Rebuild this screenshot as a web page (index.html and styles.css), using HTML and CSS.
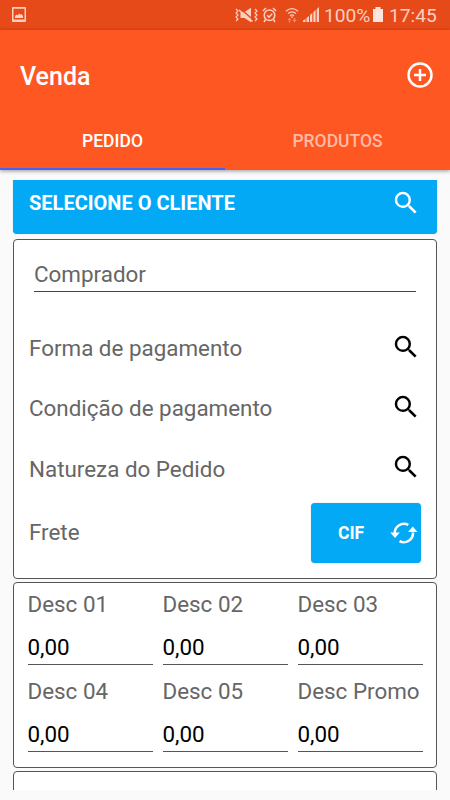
FILE: index.html
```html
<!DOCTYPE html>
<html lang="pt-BR">
<head>
<meta charset="utf-8">
<title>Venda</title>
<link rel="stylesheet" href="styles.css">
</head>
<body>
<svg class="defs" width="0" height="0">
  <symbol id="search" viewBox="0 0 24 24"><path d="M15.5 14h-.79l-.28-.27A6.47 6.47 0 0 0 16 9.5 6.5 6.5 0 1 0 9.5 16c1.61 0 3.09-.59 4.23-1.57l.27.28v.79l5 4.99L20.49 19l-4.99-5zm-6 0C7.01 14 5 11.99 5 9.500S7.010 5 9.500 5 14 7.010 14 9.500 11.990 14 9.500 14z"/></symbol>
</svg>
<div class="status">
  <svg class="st-img" viewBox="0 0 14 15"><path fill-rule="evenodd" d="M1 0h12a1 1 0 0 1 1 1v13a1 1 0 0 1-1 1H1a1 1 0 0 1-1-1V1a1 1 0 0 1 1-1zM1.500 1.700v10.800h11V1.700zM3 11V9l1.500-1.500 1 .7L7.500 6.500l1 1.200 1-.7L11 9v2z"/></svg>
  <svg class="st-mute" viewBox="0 0 23 16"><path d="M5.500 5h4L16 .8v14.400L9.500 11h-4z"/><path class="cut" d="M5 1.500 18.500 13"/><path class="ln" d="M4 3 17.500 14.500"/><path class="thin" d="M1 2l2 2-2 2 2 2-2 2 2 2-2 2M20 2l2 2-2 2 2 2-2 2 2 2-2 2"/></svg>
  <svg class="st-alarm" viewBox="0 0 15 16"><circle class="ln" cx="7.500" cy="8.300" r="5.300"/><path class="ln" d="M1 4 4 1M14 4 11 1M3.500 12.500 2 15M11.500 12.500 13 15M5 8.200l2 2 3.200-3.500"/></svg>
  <svg class="st-wifi" viewBox="0 0 14 16"><path class="wl" d="M1 4.200q6-5 12 0M3 6.600q4-3.400 8 0M5 8.800q2-1.700 4 0"/><path d="M7 11.200 5.500 9.500h3z"/><path class="dim" d="M2.500 13 4.500 10.800 6.500 13H5.200v2.500H3.800V13zM7.500 13 9.500 15.500 11.500 13h-1.300v-2H8.800v2z"/></svg>
  <svg class="st-signal" viewBox="0 0 16 16"><path d="M0 15v-1.500L2.500 12v3zM3.500 15v-4L6 9v6zM7 15V8l2.300-2v9zM10.400 15V5l2.200-2v12zM13.700 15V2.200L16 0v15z"/></svg>
  <span class="st-text st-pct">100%</span>
  <svg class="st-bat" viewBox="0 0 10 15"><path d="M2.500 0h5v2H10v13H0V2h2.500z"/></svg>
  <span class="st-text st-time">17:45</span>
</div>
<header class="appbar">
  <div class="titlebar">
    <h1 class="title">Venda</h1>
    <svg class="add" viewBox="0 0 26 26"><circle cx="13" cy="13" r="11.500"/><path d="M13 7v12M7 13h12"/></svg>
  </div>
  <nav class="tabs">
    <div class="tab active">PEDIDO</div>
    <div class="tab">PRODUTOS</div>
  </nav>
</header>
<main class="content">
  <div class="client"><span>SELECIONE O CLIENTE</span><svg class="search"><use href="#search"/></svg></div>
  <section class="card order">
    <div class="buyer">Comprador</div>
    <div class="row first"><span>Forma de pagamento</span><svg class="search"><use href="#search"/></svg></div>
    <div class="row"><span>Condição de pagamento</span><svg class="search"><use href="#search"/></svg></div>
    <div class="row last"><span>Natureza do Pedido</span><svg class="search"><use href="#search"/></svg></div>
    <div class="freight"><span>Frete</span>
      <div class="cif"><span>CIF</span>
        <svg class="sync" viewBox="0 0 28 22"><path class="arc" d="M4.800 11.500A9.200 9.200 0 0 1 18.300 2.900M23 10.500A9.200 9.200 0 0 1 9.500 19.100"/><path d="M.3 10.500h9.500L5 16zM18 10h9.500L22.800 4.500z"/></svg>
      </div>
    </div>
  </section>
  <section class="card discounts">
    <div class="field"><label>Desc 01</label><div class="value">0,00</div></div>
    <div class="field"><label>Desc 02</label><div class="value">0,00</div></div>
    <div class="field"><label>Desc 03</label><div class="value">0,00</div></div>
    <div class="field"><label>Desc 04</label><div class="value">0,00</div></div>
    <div class="field"><label>Desc 05</label><div class="value">0,00</div></div>
    <div class="field"><label>Desc Promo</label><div class="value">0,00</div></div>
  </section>
  <section class="card next"></section>
</main>
</body>
</html>
```

FILE: styles.css
```css
* { box-sizing: border-box; }
body { margin: 0; width: 450px; height: 800px; overflow: hidden; background: #fafafa; font-family: Roboto, sans-serif; font-size: 22.4px; color: #666; }
.defs { display: block; position: absolute; }
svg { flex: none; }

.status { display: flex; height: 30px; padding-left: 12px; background: #e64a19; color: #fbcfc1; fill: #fbcfc1; }
.status svg { overflow: visible; }
.st-img { width: 14px; height: 15px; margin-top: 7px; }
.st-mute { width: 23px; height: 16px; margin: 7px 0 0 209px; }
.st-alarm { width: 15px; height: 16px; margin: 7px 0 0 4px; }
.st-wifi { width: 14px; height: 16px; margin: 7px 0 0 8px; }
.st-signal { width: 16px; height: 16px; margin: 7px 0 0 4px; }
.st-bat { width: 10px; height: 15px; margin: 7px 0 0 3px; fill: #fde4dc; }
.ln, .thin, .wl { fill: none; stroke: #fbcfc1; stroke-width: 1.5; }
.thin { stroke-width: 1.2; }
.wl { stroke-width: 1.3; }
.cut { fill: none; stroke: #e64a19; stroke-width: 1.5; }
.dim { opacity: .5; }
.st-text { font-size: 19.2px; line-height: 31px; white-space: nowrap; }
.st-pct { width: 46px; margin-left: 5px; }
.st-time { margin-left: 6px; }

.appbar { position: relative; height: 140px; background: #ff5722; color: #fff; box-shadow: 0 1px 4px rgba(0,0,0,.4); }
.titlebar { display: flex; justify-content: space-between; height: 80px; padding: 0 17px 0 20px; }
.title { margin: 32px 0 0; font-size: 25px; line-height: 30px; font-weight: 500; }
.add { width: 26px; height: 26px; margin-top: 32px; fill: none; stroke: #fff; stroke-width: 2.5; }
.tabs { display: flex; height: 60px; }
.tab { flex: 1; text-align: center; font-size: 17.5px; line-height: 62px; font-weight: 500; color: #ffbba7; }
.tab.active { color: #fff; border-bottom: 2px solid #4463ee; }

.content { height: 610px; margin-top: 10px; padding: 0 13px; overflow: hidden; }
.client { display: flex; justify-content: space-between; height: 54px; padding: 0 16px; background: #03a9f4; color: #fff; fill: #fff; border-radius: 0 0 4px 4px; font-size: 20px; font-weight: 700; line-height: 47px; box-shadow: 0 0 1px rgba(3,100,160,.5); }
.search { width: 30px; height: 30px; }
.client .search { margin-top: 8px; }
.card { background: #fff; border: 1px solid #555; border-radius: 4px; }
.order { height: 340px; margin-top: 5px; padding: 0 15px; }
.buyer { height: 52px; margin: 0 5px; padding-top: 20px; line-height: 28px; border-bottom: 1px solid #444; }
.row { display: flex; justify-content: space-between; align-items: center; height: 60px; fill: #000; }
.row.first { margin-top: 26px; }
.row.last { padding-top: 1px; }
.row .search { margin-bottom: 3px; }
.freight { display: flex; justify-content: space-between; margin-top: 5px; line-height: 59px; }
.cif { display: flex; width: 110px; height: 60px; padding: 0 3px 0 27px; justify-content: space-between; align-items: center; background: #03a9f4; border-radius: 4px; color: #fff; fill: #fff; font-size: 17.5px; font-weight: 700; line-height: 62px; box-shadow: 0 0 1px rgba(3,100,160,.5); }
.sync { width: 28px; height: 22px; }
.arc { fill: none; stroke: #fff; stroke-width: 2.5; }
.discounts { display: grid; grid-template-columns: repeat(3, 125px); grid-auto-rows: 87px; column-gap: 10px; height: 186px; margin-top: 3px; padding: 0 13.5px; }
.field label { display: block; height: 43px; padding-top: 6px; line-height: 30px; white-space: nowrap; }
.value { height: 39px; padding-top: 6px; line-height: 30px; color: #000; border-bottom: 1px solid #555; }
.next { height: 60px; margin-top: 3px; }
```
